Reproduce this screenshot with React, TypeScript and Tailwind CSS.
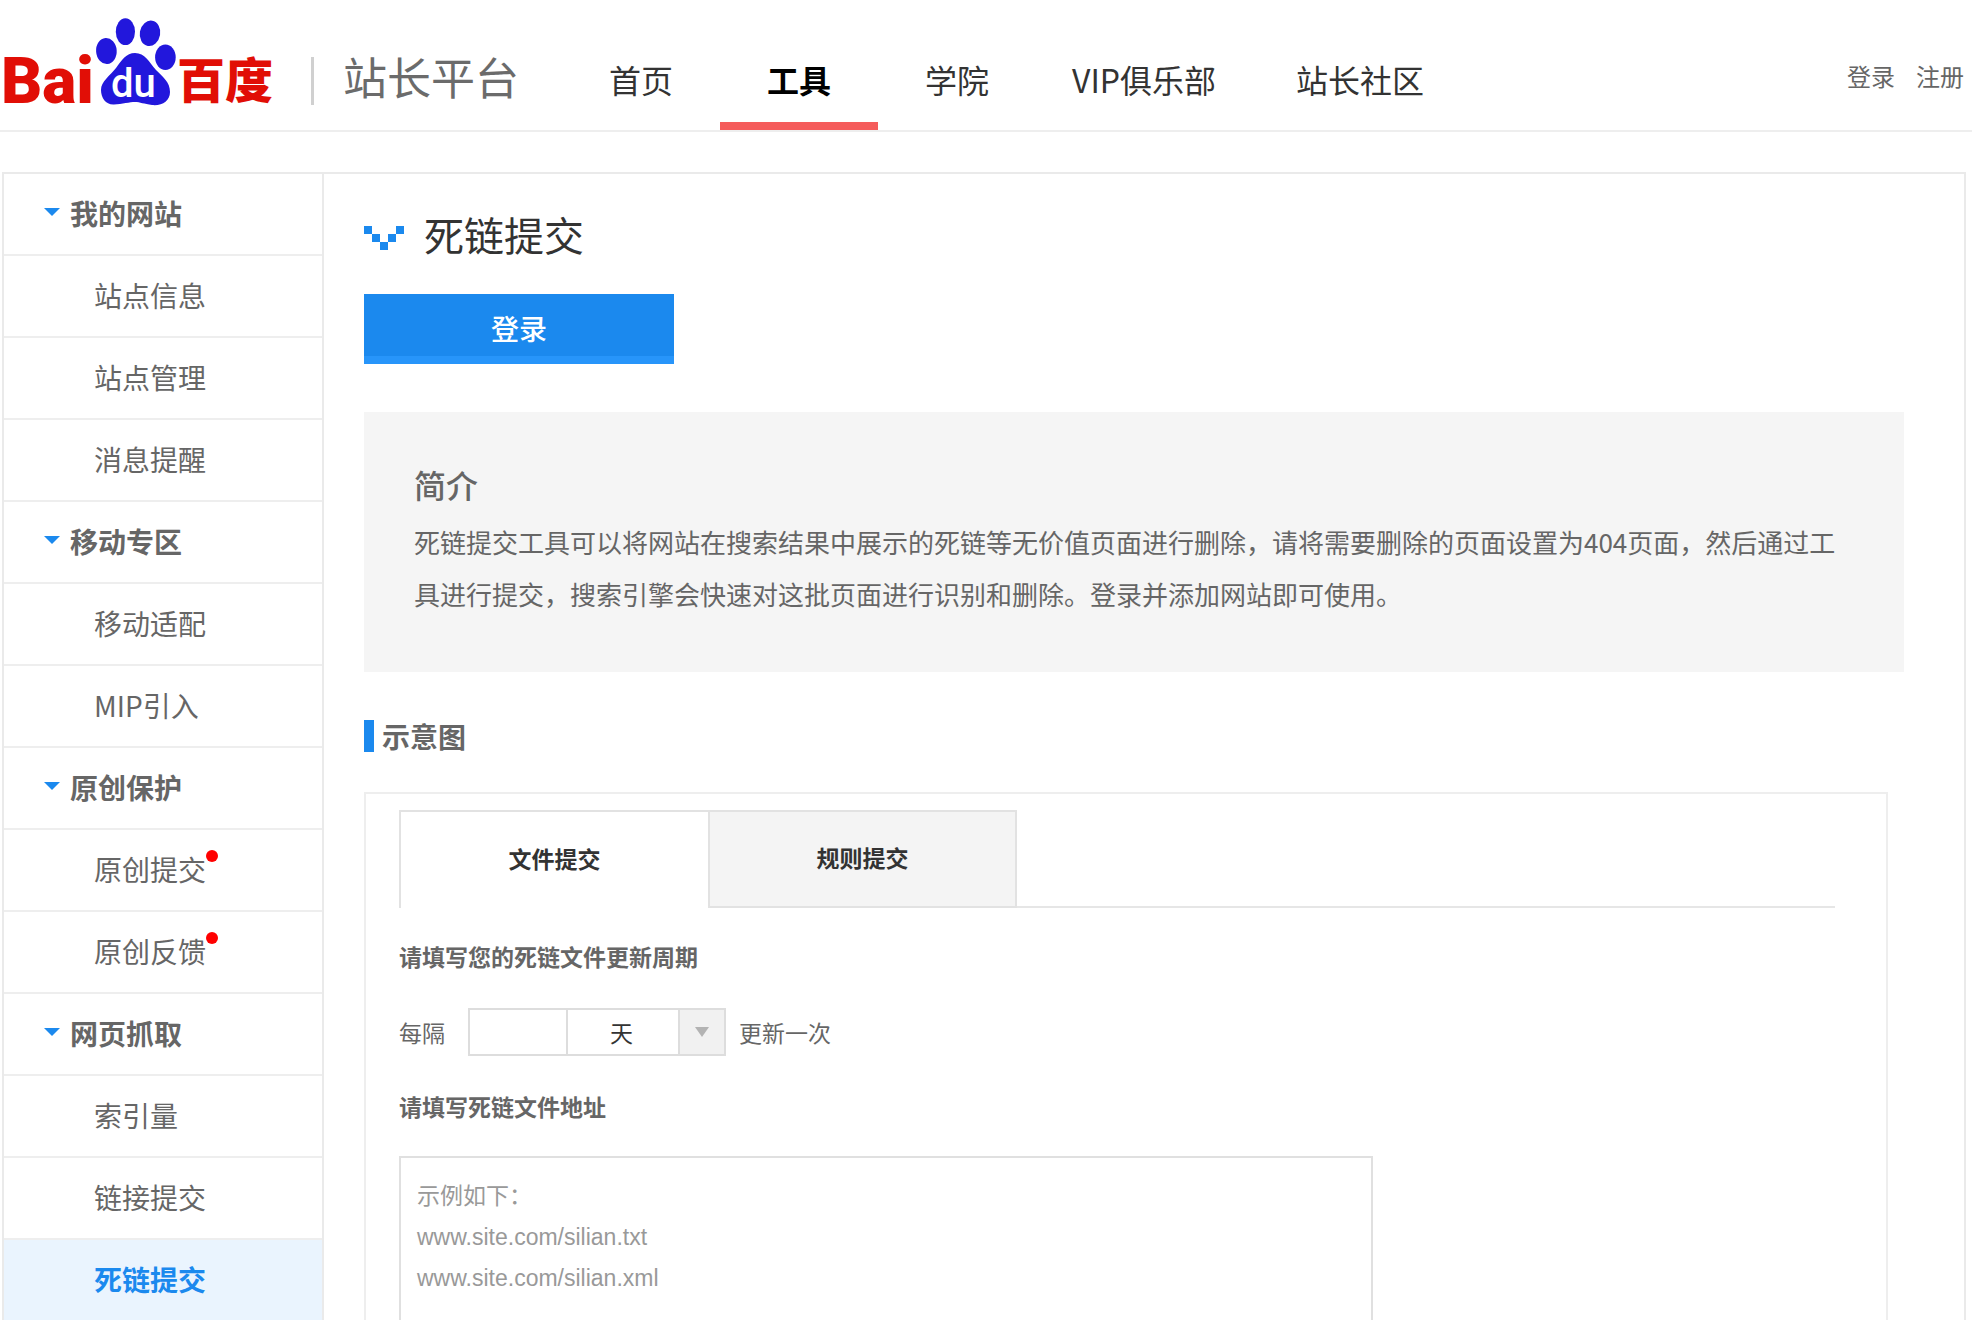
import { useState } from 'react';

const navItems = [
    { label: '首页', padding: 'px-[47px]' },
    { label: '工具', padding: 'px-[47px]' },
    { label: '学院', padding: 'px-[47px]' },
    { label: 'VIP俱乐部', padding: 'pl-9 pr-10' },
    { label: '站长社区', padding: 'px-10' },
];

const menu = [
    { title: '我的网站', items: [{ label: '站点信息' }, { label: '站点管理' }, { label: '消息提醒' }] },
    { title: '移动专区', items: [{ label: '移动适配' }, { label: 'MIP引入' }] },
    { title: '原创保护', items: [{ label: '原创提交', isNew: true }, { label: '原创反馈', isNew: true }] },
    { title: '网页抓取', items: [{ label: '索引量' }, { label: '链接提交' }, { label: '死链提交' }] },
];

function Logo() {
    return (
        <svg width="276" height="128" viewBox="0 0 276 128" role="img" aria-label="Baidu 百度" className="overflow-visible">
            <text x="1" y="103" fill="#e10e06" className="font-[Roboto,sans-serif] text-[64px] font-black">Bai</text>
            <g fill="#2217dc">
                <ellipse cx="106.4" cy="51" rx="10.3" ry="13" transform="rotate(-4 106.4 51)" />
                <ellipse cx="125.4" cy="31.7" rx="9.6" ry="13.4" />
                <ellipse cx="150" cy="33.3" rx="10.2" ry="12.8" transform="rotate(10 150 33.3)" />
                <ellipse cx="165.4" cy="57.3" rx="10.3" ry="12.7" />
                <path d="M135 53C145 53 149 62 156 70C163 77 170 82 170 92C170 101 162 106 152 105C144 104 140 102 135 102C130 102 122 104 114 104.5C106 105 101 98 101 90C101 81 110 76 116 68C122 60 126 53 135 53Z" />
            </g>
            <text x="111" y="97" fill="#fff" className="font-[Roboto,sans-serif] text-[40px] font-medium">du</text>
            <text x="177" y="98" fill="#e10e06" className="text-[48px] font-black">百度</text>
        </svg>
    );
}

function Header() {
    const [current, setCurrent] = useState('工具');

    return (
        <header className="flex h-[132px] items-stretch border-b-2 border-[#eee]">
            <a href="#" className="flex shrink-0 items-start">
                <Logo />
                <span className="mt-[57px] ml-[35px] h-12 w-[3px] bg-[#d0d0d0]" />
                <span className="mt-12 ml-[29px] text-[44px] leading-[56px] text-[#6b6b6b]">站长平台</span>
            </a>
            <nav className="ml-[43px] flex">
                {navItems.map((item) => (
                    <a
                        key={item.label}
                        href="#"
                        onClick={() => setCurrent(item.label)}
                        className={`flex items-center border-b-8 pt-9 text-[32px] leading-[48px] whitespace-nowrap ${item.padding} ${
                            current === item.label ? 'border-[#f55c5b] font-bold text-black' : 'border-transparent text-[#333]'
                        }`}
                    >
                        {item.label}
                    </a>
                ))}
            </nav>
            <div className="ml-auto flex items-center gap-[21px] pt-[22px] pr-2 text-2xl whitespace-nowrap text-[#666]">
                <a href="#">登录</a>
                <a href="#">注册</a>
            </div>
        </header>
    );
}

function Sidebar() {
    const [active, setActive] = useState('死链提交');

    return (
        <aside className="w-80 shrink-0 border-r-2 border-[#eaeaea] text-[28px] leading-10 text-[#666]">
            {menu.map((group) => (
                <div key={group.title}>
                    <h2 className="flex h-[82px] items-center gap-2.5 border-b-2 border-[#eee] pb-0.5 pl-10 font-bold">
                        <svg width="16" height="8" viewBox="0 0 16 8" className="mb-0.5">
                            <path d="M0 0H16L8 8Z" fill="#1b89ee" />
                        </svg>
                        {group.title}
                    </h2>
                    <ul>
                        {group.items.map((item) => (
                            <li key={item.label}>
                                <a
                                    href="#"
                                    onClick={() => setActive(item.label)}
                                    className={`flex h-[82px] items-center border-b-2 border-[#eee] pb-0.5 pl-[90px] ${
                                        active === item.label ? 'bg-[#eaf4fe] font-bold text-[#1b89ee]' : ''
                                    }`}
                                >
                                    <span className="relative">
                                        {item.label}
                                        {item.isNew && <i className="absolute top-px -right-3 size-3 rounded-full bg-[#f00]" />}
                                    </span>
                                </a>
                            </li>
                        ))}
                    </ul>
                </div>
            ))}
        </aside>
    );
}

function SubmitPreview() {
    const [tab, setTab] = useState('文件提交');

    return (
        <div className="mr-4 border-2 border-[#eee] pt-4 pr-[51px] pl-[33px] text-[23px] leading-8 text-[#666]">
            <div className="flex">
                {['文件提交', '规则提交'].map((name) => (
                    <button
                        key={name}
                        type="button"
                        onClick={() => setTab(name)}
                        className={`h-[98px] w-[309px] border-t-2 border-l-2 pb-1 font-bold text-[#333] last-of-type:border-r-2 ${
                            tab === name ? 'border-[#e2e2e2] bg-white' : 'border-b-2 border-[#e2e2e2] bg-[#f4f4f4]'
                        }`}
                    >
                        {name}
                    </button>
                ))}
                <div className="grow border-b-2 border-[#e6e6e6]" />
            </div>

            <label htmlFor="period" className="mt-8 block font-bold">请填写您的死链文件更新周期</label>
            <div className="mt-9 flex items-center">
                <span>每隔</span>
                <input id="period" type="text" className="ml-[23px] h-12 w-[100px] border-2 border-[#ddd] px-2 outline-none" />
                <div className="relative -ml-0.5">
                    <select
                        aria-label="更新周期单位"
                        defaultValue="天"
                        className="h-12 w-[160px] appearance-none border-2 border-[#ddd] bg-white pl-[42px] text-[#333] outline-none"
                    >
                        <option>天</option>
                        <option>周</option>
                    </select>
                    <span className="pointer-events-none absolute inset-y-0 right-0 flex w-12 items-center justify-center border-2 border-[#ddd] bg-[#f1f1f1]">
                        <svg width="14" height="10" viewBox="0 0 14 10">
                            <path d="M0 0H14L7 10Z" fill="#b3b3b3" />
                        </svg>
                    </span>
                </div>
                <span className="ml-[13px]">更新一次</span>
            </div>

            <label htmlFor="urls" className="mt-[34px] block font-bold">请填写死链文件地址</label>
            <textarea
                id="urls"
                rows={7}
                className="mt-[34px] block w-[974px] max-w-full resize-none border-2 border-[#e0e0e0] px-4 py-[18px] font-['Liberation_Sans','Noto_Sans_CJK_SC',sans-serif] leading-[41px] text-[#999] outline-none"
                defaultValue={'示例如下：\nwww.site.com/silian.txt\nwww.site.com/silian.xml'}
            />
        </div>
    );
}

export default function App() {
    return (
        <div className="h-screen overflow-hidden bg-white font-['Noto_Sans_CJK_SC',sans-serif]">
            <Header />
            <div className="mt-10 mr-1.5 ml-0.5 flex border-2 border-[#eaeaea]">
                <Sidebar />
                <main className="min-w-0 grow pt-8 pr-[60px] pl-10">
                    <h1 className="flex items-center gap-5 text-[40px] text-[#333]">
                        <svg width="40" height="24" viewBox="0 0 40 24" fill="#1b89ee" className="mt-1">
                            <path d="M0 0h8v8H0zM8 8h8v8H8zM16 16h8v8h-8zM24 8h8v8h-8zM32 0h8v8h-8z" />
                        </svg>
                        <span className="pb-1 leading-[56px]">死链提交</span>
                    </h1>
                    <button type="button" className="mt-7 block h-[70px] w-[310px] border-b-8 border-[#2795fa] bg-[#1b89ee] pt-1.5 text-[28px] leading-10 font-medium text-white">
                        登录
                    </button>

                    <section className="mt-12 bg-[#f5f5f5] px-[50px] pt-12 pb-[52px] text-[#666]">
                        <h2 className="text-[32px] leading-[48px] font-medium">简介</h2>
                        <p className="mt-2 text-[26px] leading-[52px]">
                            死链提交工具可以将网站在搜索结果中展示的死链等无价值页面进行删除，请将需要删除的页面设置为404页面，然后通过工具进行提交，搜索引擎会快速对这批页面进行识别和删除。登录并添加网站即可使用。
                        </p>
                    </section>

                    <section className="mt-[44px]">
                        <h2 className="flex items-center gap-2 text-[28px] leading-10 font-bold text-[#666]">
                            <span className="h-8 w-2.5 bg-[#1b89ee]" />
                            示意图
                        </h2>
                        <div className="mt-9">
                            <SubmitPreview />
                        </div>
                    </section>
                </main>
            </div>
        </div>
    );
}
